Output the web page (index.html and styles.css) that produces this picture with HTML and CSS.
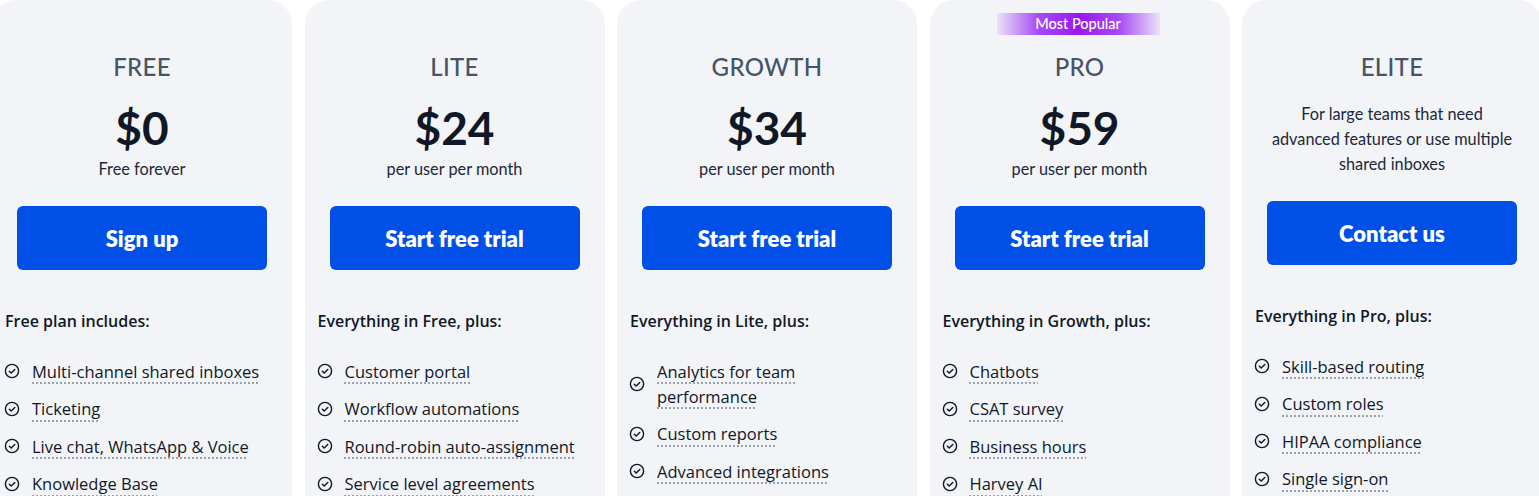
FILE: index.html
```html
<!DOCTYPE html>
<html lang="en">
<head>
    <meta charset="UTF-8">
    <meta name="viewport" content="width=device-width, initial-scale=1.0">
    <title>Pricing</title>
    <link rel="stylesheet" href="styles.css">
</head>
<body>

    <svg width="0" height="0" style="position:absolute">
        <symbol id="check" viewBox="0 0 16 16">
            <circle cx="8" cy="8" r="6.6" fill="none" stroke="currentColor" stroke-width="1.4"/>
            <path d="M5.3 8.2l1.9 1.9 3.6-3.7" fill="none" stroke="currentColor" stroke-width="1.4" stroke-linecap="round" stroke-linejoin="round"/>
        </symbol>
    </svg>

    <div class="plans">

        <div class="plan">
            <h2 class="plan-name">FREE</h2>
            <div class="price">$0</div>
            <div class="price-note">Free forever</div>
            <a class="plan-button" href="#">Sign up</a>
            <div class="includes">Free plan includes:</div>
            <ul class="features">
                <li><svg class="check"><use href="#check"/></svg><span>Multi-channel shared inboxes</span></li>
                <li><svg class="check"><use href="#check"/></svg><span>Ticketing</span></li>
                <li><svg class="check"><use href="#check"/></svg><span>Live chat, WhatsApp &amp; Voice</span></li>
                <li><svg class="check"><use href="#check"/></svg><span>Knowledge Base</span></li>
            </ul>
        </div>

        <div class="plan">
            <h2 class="plan-name">LITE</h2>
            <div class="price">$24</div>
            <div class="price-note">per user per month</div>
            <a class="plan-button" href="#">Start free trial</a>
            <div class="includes">Everything in Free, plus:</div>
            <ul class="features">
                <li><svg class="check"><use href="#check"/></svg><span>Customer portal</span></li>
                <li><svg class="check"><use href="#check"/></svg><span>Workflow automations</span></li>
                <li><svg class="check"><use href="#check"/></svg><span>Round-robin auto-assignment</span></li>
                <li><svg class="check"><use href="#check"/></svg><span>Service level agreements</span></li>
            </ul>
        </div>

        <div class="plan">
            <h2 class="plan-name">GROWTH</h2>
            <div class="price">$34</div>
            <div class="price-note">per user per month</div>
            <a class="plan-button" href="#">Start free trial</a>
            <div class="includes">Everything in Lite, plus:</div>
            <ul class="features">
                <li><svg class="check"><use href="#check"/></svg><span>Analytics for team performance</span></li>
                <li><svg class="check"><use href="#check"/></svg><span>Custom reports</span></li>
                <li><svg class="check"><use href="#check"/></svg><span>Advanced integrations</span></li>
            </ul>
        </div>

        <div class="plan">
            <div class="badge">Most Popular</div>
            <h2 class="plan-name">PRO</h2>
            <div class="price">$59</div>
            <div class="price-note">per user per month</div>
            <a class="plan-button" href="#">Start free trial</a>
            <div class="includes">Everything in Growth, plus:</div>
            <ul class="features">
                <li><svg class="check"><use href="#check"/></svg><span>Chatbots</span></li>
                <li><svg class="check"><use href="#check"/></svg><span>CSAT survey</span></li>
                <li><svg class="check"><use href="#check"/></svg><span>Business hours</span></li>
                <li><svg class="check"><use href="#check"/></svg><span>Harvey AI</span></li>
            </ul>
        </div>

        <div class="plan">
            <h2 class="plan-name">ELITE</h2>
            <p class="plan-desc">For large teams that need advanced features or use multiple shared inboxes</p>
            <a class="plan-button" href="#">Contact us</a>
            <div class="includes">Everything in Pro, plus:</div>
            <ul class="features">
                <li><svg class="check"><use href="#check"/></svg><span>Skill-based routing</span></li>
                <li><svg class="check"><use href="#check"/></svg><span>Custom roles</span></li>
                <li><svg class="check"><use href="#check"/></svg><span>HIPAA compliance</span></li>
                <li><svg class="check"><use href="#check"/></svg><span>Single sign-on</span></li>
            </ul>
        </div>

    </div>

</body>
</html>
```

FILE: styles.css
```css
html {
    overflow: hidden;
}

body {
    margin: 0;
    background: #fff;
    font-family: 'Open Sans', sans-serif;
    color: #101828;
}

.plans {
    display: flex;
    gap: 12.5px;
    margin-left: -8px;
}

.plan {
    position: relative;
    flex: 0 0 300px;
    background-color: #f2f4f7;
    border-radius: 24px;
    padding: 51px 0 40px;
    min-height: 600px;
    box-sizing: border-box;
    display: flex;
    flex-direction: column;
    align-items: center;
}

.badge {
    position: absolute;
    top: 13px;
    left: 67px;
    width: 163px;
    height: 22px;
    line-height: 22px;
    text-align: center;
    color: #fff;
    font-family: 'Lato', sans-serif;
    font-size: 14.5px;
    font-weight: 500;
    background: linear-gradient(90deg, rgba(196, 120, 250, 0.15) 0%, #a64cf5 25%, #9b16ee 50%, #a64cf5 75%, rgba(196, 120, 250, 0.15) 100%);
}

.plan-name {
    margin: 0 0 18px;
    font-family: 'Lato', sans-serif;
    font-size: 24px;
    line-height: 32px;
    font-weight: 500;
    color: #475467;
    letter-spacing: 0.3px;
}

.price {
    margin-top: 3px;
    font-family: 'Lato', sans-serif;
    font-size: 46px;
    line-height: 48px;
    font-weight: 700;
    color: #101828;
}

.price-note {
    margin-top: 4px;
    font-family: 'Lato', sans-serif;
    font-size: 16.3px;
    line-height: 25px;
    color: #1d2939;
}

.plan-desc {
    margin: 0;
    padding: 0 26px;
    text-align: center;
    font-family: 'Lato', sans-serif;
    font-size: 16.3px;
    line-height: 25px;
    color: #1d2939;
}

.plan-button {
    margin-top: 25px;
    width: 250px;
    height: 64px;
    border-radius: 6px;
    background-color: #0050e8;
    color: #fff;
    text-decoration: none;
    font-family: 'Lato', sans-serif;
    font-size: 22px;
    font-weight: 800;
    display: flex;
    align-items: center;
    justify-content: center;
}

.includes {
    align-self: stretch;
    margin-top: 38.5px;
    padding-left: 13px;
    font-size: 16px;
    line-height: 25px;
    font-weight: 600;
    color: #101828;
}

.features {
    align-self: stretch;
    list-style: none;
    margin: 25px 0 0;
    padding: 0 22px 0 12px;
}

.features li {
    display: flex;
    align-items: center;
    gap: 12px;
    margin-bottom: 12.5px;
    font-size: 16.5px;
    line-height: 25px;
    color: #101828;
}

.check {
    flex: 0 0 16px;
    width: 16px;
    height: 16px;
    color: #101828;
}

.features span {
    text-decoration: underline dotted #98a2b3;
    text-decoration-thickness: 1.5px;
    text-underline-offset: 5px;
}
```
